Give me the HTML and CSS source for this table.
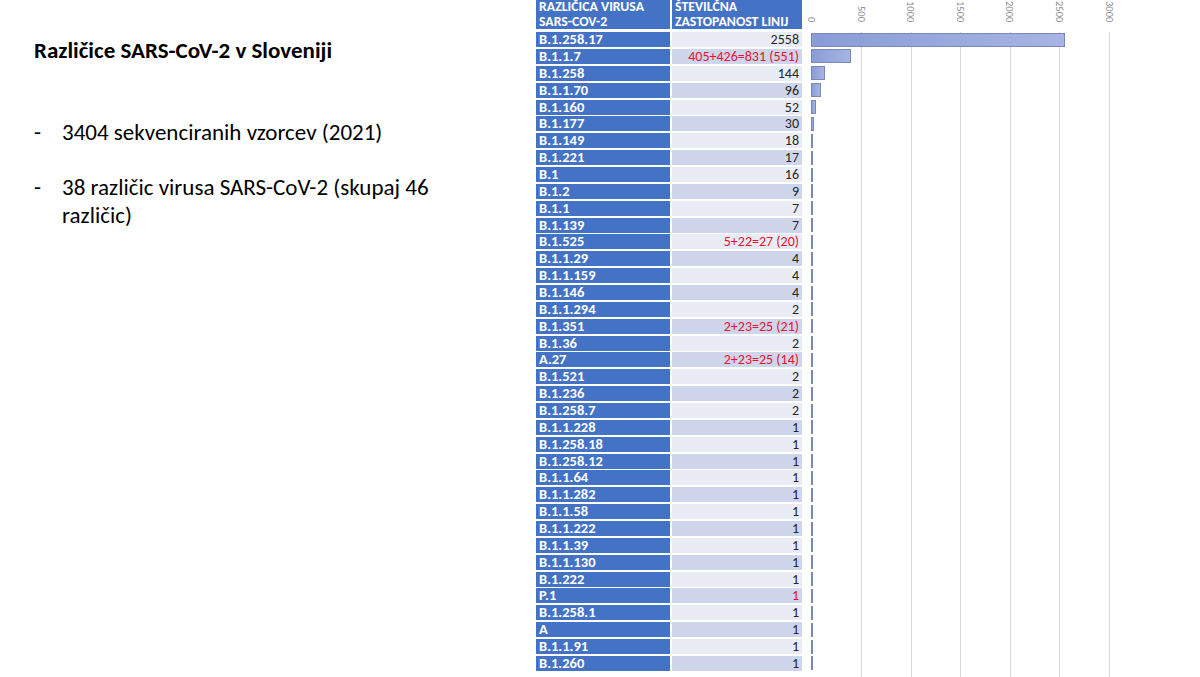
FILE: index.html
```html
<!DOCTYPE html>
<html lang="sl">
<head>
<meta charset="utf-8">
<title>Različice SARS-CoV-2 v Sloveniji</title>
<link rel="stylesheet" href="styles.css">
</head>
<body>
<main class="slide">
  <section class="intro">
    <h1 class="title">Različice SARS-CoV-2 v Sloveniji</h1>
    <ul class="points">
      <li>3404 sekvenciranih vzorcev (2021)</li>
      <li>38 različic virusa SARS-CoV-2 (skupaj 46 različic)</li>
    </ul>
  </section>

  <section class="data">
    <div class="grid-lines"></div>
    <div class="row head">
      <div class="cell name">RAZLIČICA VIRUSA<br>SARS-COV-2</div>
      <div class="cell value">ŠTEVILČNA<br>ZASTOPANOST LINIJ</div>
      <div class="axis">
        <span class="tick t0">0</span>
        <span class="tick t1">500</span>
        <span class="tick t2">1000</span>
        <span class="tick t3">1500</span>
        <span class="tick t4">2000</span>
        <span class="tick t5">2500</span>
        <span class="tick t6">3000</span>
      </div>
    </div>

    <div class="row"><div class="cell name">B.1.258.17</div><div class="cell value">2558</div><div class="track"><div class="bar" style="width:253.8px"></div></div></div>
    <div class="row"><div class="cell name">B.1.1.7</div><div class="cell value red">405+426=831 (551)</div><div class="track"><div class="bar" style="width:40.2px"></div></div></div>
    <div class="row"><div class="cell name">B.1.258</div><div class="cell value">144</div><div class="track"><div class="bar" style="width:14.3px"></div></div></div>
    <div class="row"><div class="cell name">B.1.1.70</div><div class="cell value">96</div><div class="track"><div class="bar" style="width:9.5px"></div></div></div>
    <div class="row"><div class="cell name">B.1.160</div><div class="cell value">52</div><div class="track"><div class="bar" style="width:5.2px"></div></div></div>
    <div class="row"><div class="cell name">B.1.177</div><div class="cell value">30</div><div class="track"><div class="bar" style="width:3px"></div></div></div>
    <div class="row"><div class="cell name">B.1.149</div><div class="cell value">18</div><div class="track"><div class="bar" style="width:1.8px"></div></div></div>
    <div class="row"><div class="cell name">B.1.221</div><div class="cell value">17</div><div class="track"><div class="bar" style="width:1.7px"></div></div></div>
    <div class="row"><div class="cell name">B.1</div><div class="cell value">16</div><div class="track"><div class="bar" style="width:1.6px"></div></div></div>
    <div class="row"><div class="cell name">B.1.2</div><div class="cell value">9</div><div class="track"><div class="bar" style="width:0.9px"></div></div></div>
    <div class="row"><div class="cell name">B.1.1</div><div class="cell value">7</div><div class="track"><div class="bar" style="width:0.7px"></div></div></div>
    <div class="row"><div class="cell name">B.1.139</div><div class="cell value">7</div><div class="track"><div class="bar" style="width:0.7px"></div></div></div>
    <div class="row"><div class="cell name">B.1.525</div><div class="cell value red">5+22=27 (20)</div><div class="track"><div class="bar" style="width:0.5px"></div></div></div>
    <div class="row"><div class="cell name">B.1.1.29</div><div class="cell value">4</div><div class="track"><div class="bar" style="width:0.4px"></div></div></div>
    <div class="row"><div class="cell name">B.1.1.159</div><div class="cell value">4</div><div class="track"><div class="bar" style="width:0.4px"></div></div></div>
    <div class="row"><div class="cell name">B.1.146</div><div class="cell value">4</div><div class="track"><div class="bar" style="width:0.4px"></div></div></div>
    <div class="row"><div class="cell name">B.1.1.294</div><div class="cell value">2</div><div class="track"><div class="bar" style="width:0.2px"></div></div></div>
    <div class="row"><div class="cell name">B.1.351</div><div class="cell value red">2+23=25 (21)</div><div class="track"><div class="bar" style="width:0.2px"></div></div></div>
    <div class="row"><div class="cell name">B.1.36</div><div class="cell value">2</div><div class="track"><div class="bar" style="width:0.2px"></div></div></div>
    <div class="row"><div class="cell name">A.27</div><div class="cell value red">2+23=25 (14)</div><div class="track"><div class="bar" style="width:0.2px"></div></div></div>
    <div class="row"><div class="cell name">B.1.521</div><div class="cell value">2</div><div class="track"><div class="bar" style="width:0.2px"></div></div></div>
    <div class="row"><div class="cell name">B.1.236</div><div class="cell value">2</div><div class="track"><div class="bar" style="width:0.2px"></div></div></div>
    <div class="row"><div class="cell name">B.1.258.7</div><div class="cell value">2</div><div class="track"><div class="bar" style="width:0.2px"></div></div></div>
    <div class="row"><div class="cell name">B.1.1.228</div><div class="cell value">1</div><div class="track"><div class="bar" style="width:0.1px"></div></div></div>
    <div class="row"><div class="cell name">B.1.258.18</div><div class="cell value">1</div><div class="track"><div class="bar" style="width:0.1px"></div></div></div>
    <div class="row"><div class="cell name">B.1.258.12</div><div class="cell value">1</div><div class="track"><div class="bar" style="width:0.1px"></div></div></div>
    <div class="row"><div class="cell name">B.1.1.64</div><div class="cell value">1</div><div class="track"><div class="bar" style="width:0.1px"></div></div></div>
    <div class="row"><div class="cell name">B.1.1.282</div><div class="cell value">1</div><div class="track"><div class="bar" style="width:0.1px"></div></div></div>
    <div class="row"><div class="cell name">B.1.1.58</div><div class="cell value">1</div><div class="track"><div class="bar" style="width:0.1px"></div></div></div>
    <div class="row"><div class="cell name">B.1.1.222</div><div class="cell value">1</div><div class="track"><div class="bar" style="width:0.1px"></div></div></div>
    <div class="row"><div class="cell name">B.1.1.39</div><div class="cell value">1</div><div class="track"><div class="bar" style="width:0.1px"></div></div></div>
    <div class="row"><div class="cell name">B.1.1.130</div><div class="cell value">1</div><div class="track"><div class="bar" style="width:0.1px"></div></div></div>
    <div class="row"><div class="cell name">B.1.222</div><div class="cell value">1</div><div class="track"><div class="bar" style="width:0.1px"></div></div></div>
    <div class="row"><div class="cell name">P.1</div><div class="cell value red">1</div><div class="track"><div class="bar" style="width:0.1px"></div></div></div>
    <div class="row"><div class="cell name">B.1.258.1</div><div class="cell value">1</div><div class="track"><div class="bar" style="width:0.1px"></div></div></div>
    <div class="row"><div class="cell name">A</div><div class="cell value">1</div><div class="track"><div class="bar" style="width:0.1px"></div></div></div>
    <div class="row"><div class="cell name">B.1.1.91</div><div class="cell value">1</div><div class="track"><div class="bar" style="width:0.1px"></div></div></div>
    <div class="row"><div class="cell name">B.1.260</div><div class="cell value">1</div><div class="track"><div class="bar" style="width:0.1px"></div></div></div>
  </section>
</main>
</body>
</html>
```

FILE: styles.css
```css
* { box-sizing: border-box; }

html, body {
  margin: 0;
  padding: 0;
  background: #ffffff;
}

body {
  width: 1200px;
  height: 677px;
  overflow: hidden;
  font-family: Carlito, "Open Sans", "Liberation Sans", sans-serif;
  color: #000;
}

.slide {
  display: flex;
  width: 1200px;
  height: 677px;
}

/* ---------- left text ---------- */
.intro {
  width: 536px;
  flex: none;
  padding: 37px 0 0 34px;
}

.title {
  margin: 0;
  font-size: 23px;
  font-weight: 700;
  line-height: 26px;
}

.points {
  list-style: none;
  margin: 55px 0 0;
  padding: 0;
  width: 440px;
  font-size: 23px;
  line-height: 28px;
}

.points li {
  position: relative;
  padding-left: 28px;
  margin-bottom: 27px;
}

.points li::before {
  content: "-";
  position: absolute;
  left: 0;
  top: 0;
}

/* ---------- table + chart ---------- */
.data {
  position: relative;
  flex: none;
  width: 600px;
}

.row {
  display: flex;
  height: 15px;
  margin-top: 1.86px;
  font-size: 14px;
  line-height: 15px;
}

.row.head {
  height: 29px;
  margin-top: 0;
  margin-bottom: 3.14px;
}

.cell {
  white-space: nowrap;
}

.name {
  width: 134px;
  flex: none;
  padding-left: 3px;
  background: #4472c4;
  color: #ffffff;
  font-weight: 700;
  font-size: 14.5px;
}

.value {
  width: 130px;
  flex: none;
  margin-left: 2px;
  padding-right: 3px;
  text-align: right;
  color: #262626;
  background: #cfd5ea;
}

.row:nth-child(odd) .value { background: #e9ebf5; }

.head .name,
.head .value {
  background: #4472c4;
  color: #ffffff;
  font-weight: 700;
  font-size: 13.8px;
  text-align: left;
  padding-left: 3px;
  padding-top: 0;
  line-height: 14.5px;
}

.value.red { color: #e8112d; }

.track {
  flex: 1;
  margin-left: 9px;
  position: relative;
  z-index: 1;
}

.bar {
  height: 14px;
  margin-top: 0.5px;
  background: linear-gradient(to right, #8a9cd8, #a7b4e3);
  border: 1px solid #7a89b4;
}

/* chart gridlines and axis */
.grid-lines {
  position: absolute;
  left: 324.6px;
  top: 32px;
  width: 250px;
  height: 645px;
  background: repeating-linear-gradient(to right,
    #d9d9d9 0, #d9d9d9 1px, transparent 1px, transparent 49.6px);
}

.axis {
  position: relative;
  flex: 1;
  margin-left: 9px;
}

.tick {
  position: absolute;
  bottom: 7px;
  writing-mode: vertical-rl;
  font-size: 10.5px;
  line-height: 11px;
  color: #8c8c8c;
  transform: translateX(-50%);
}

.t0 { left: 0.5px; }
.t1 { left: 50.1px; }
.t2 { left: 99.7px; }
.t3 { left: 149.3px; }
.t4 { left: 198.9px; }
.t5 { left: 248.5px; }
.t6 { left: 298.1px; }
```
